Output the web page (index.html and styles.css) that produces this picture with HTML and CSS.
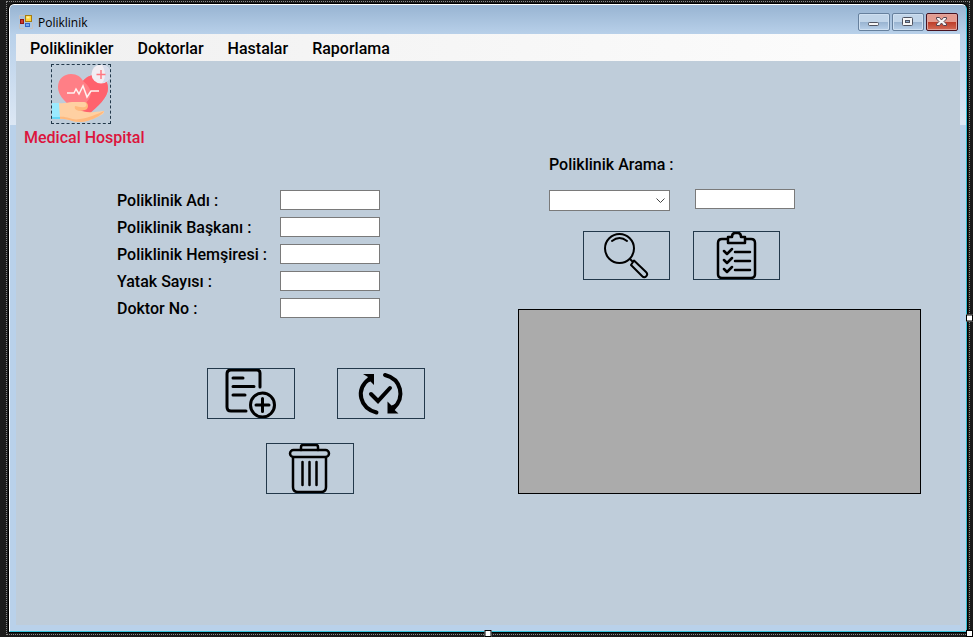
FILE: index.html
```html
<!DOCTYPE html>
<html lang="tr">
<head>
<meta charset="utf-8">
<title>Poliklinik</title>
<link rel="stylesheet" href="styles.css">
</head>
<body>
<div class="designer">
  <div class="window">
    <header class="titlebar">
      <svg class="app-icon" width="14" height="14" viewBox="0 0 14 14" aria-hidden="true">
        <path d="M.5 4V.5H6M.5 9v4.500H5M11 13.500h2.500V8" fill="none" stroke="#c5c2bf"/>
        <rect x="6.500" y=".5" width="6" height="6" fill="#ffd43c" stroke="#a67d12"/>
        <path d="M7.500 1.500h3v2h-3z" fill="#fff0a5"/>
        <rect x="1.500" y="4.500" width="3" height="4" fill="#cf392d" stroke="#8e1714"/>
        <rect x="6.500" y="8.500" width="4" height="3" fill="#77a9f2" stroke="#3166c4"/>
      </svg>
      <h1 class="title">Poliklinik</h1>
      <div class="controls">
        <button class="control" type="button" aria-label="Simge durumuna küçült"><svg width="30" height="16" viewBox="0 0 30 16"><rect x="9.500" y="8.500" width="10" height="3" rx="1" fill="#f7f7f7" stroke="#4f5360"/></svg></button>
        <button class="control" type="button" aria-label="Ekranı kapla"><svg width="30" height="16" viewBox="0 0 30 16"><rect x="9.500" y="3.500" width="10" height="8" rx="1" fill="#f7f7f7" stroke="#4f5360"/><rect x="12.500" y="6.500" width="4" height="2" fill="#8daaca" stroke="#4f5360"/></svg></button>
        <button class="control control-close" type="button" aria-label="Kapat"><svg width="30" height="16" viewBox="0 0 30 16"><path d="M9.500 3.500h3l2 2.500 2-2.500h3v1.500l-2.500 2.500 2.500 2.500v1.500h-3l-2-2.500-2 2.500h-3V10l2.500-2.500L9.500 5z" fill="#f7f7f7" stroke="#574550"/></svg></button>
      </div>
    </header>
    <nav class="menu">
      <a href="#poliklinikler">Poliklinikler</a>
      <a href="#doktorlar">Doktorlar</a>
      <a href="#hastalar">Hastalar</a>
      <a href="#raporlama">Raporlama</a>
    </nav>
    <main class="client">
      <section class="left">
        <div class="brand">
          <svg class="logo" viewBox="0 0 58 58" aria-hidden="true">
            <path d="M31 50C21 43 6 34 6 22 6 14 12 9 19 9c6 0 10 3 12 7 3-4 7-6 11-6 8 0 14 5 14 13 0 10-12 21-25 27z" fill="#ff7f86"/>
            <path d="M31 16c3-4 8-6 12-6 7 0 13 5 13 13 0 10-10 18-20 27l-9-8c12-5 17-16 4-26z" fill="#ff626d"/>
            <path d="M15 28h7l2-4 3 5 4-8 4 11 4-6h8" fill="none" stroke="#fff3f1" stroke-width="1.500"/>
            <circle cx="49" cy="9" r="9.500" fill="#f2edf2"/><path d="M50 0a9 9 0 0 1 0 18c4-5 4-12 0-18z" fill="#d6dceb"/>
            <path d="M49 5v9M44.500 9.500h9" stroke="#ff7882" stroke-width="1.500"/>
            <path d="M7 38c5 1 9-1 13-1h12c4 0 4 5 1 6l-8 1c9 5 17 3 26 2 2 0 1 2 0 3-7 4-15 8-23 8-9 0-13-4-21-3z" fill="#ffd0a2"/>
            <path d="M23 41c3 0 5 2 10 1 2-1 2-3 0-5 4 1 4 7 0 8l-6 1c-3-1-5-2-4-5z" fill="#ffb97d"/>
            <path d="M7 52c9-1 13 4 21 2 9-1 17-5 24-8-2 5-16 11-24 11-9 0-13-4-21-3z" fill="#ffb97d"/>
            <path d="M0 38h7l1 15H0z" fill="#9beaff"/><path d="M0 52h8v2H0z" fill="#65d7f7"/>
          </svg>
          <p class="brand-name">Medical Hospital</p>
        </div>
        <form class="form">
          <label for="ad">Poliklinik Adı :</label><input id="ad" type="text">
          <label for="baskan">Poliklinik Başkanı :</label><input id="baskan" type="text">
          <label for="hemsire">Poliklinik Hemşiresi :</label><input id="hemsire" type="text">
          <label for="yatak">Yatak Sayısı :</label><input id="yatak" type="text">
          <label for="doktor">Doktor No :</label><input id="doktor" type="text">
        </form>
        <div class="actions">
          <div class="action-row">
            <button class="tool" type="button" aria-label="Ekle"><svg width="86" height="49" viewBox="0 0 86 49">
              <g fill="none" stroke="#000" stroke-width="3" stroke-linecap="round"><path d="M38 42H23q-4 0-4-4V5q0-4 4-4h26q3 0 3 3v14M25 9h10M25 17.500h21M25 26h12"/><circle cx="54.500" cy="36" r="12"/><path d="M48 36h13M54.500 29.500v13"/></g></svg></button>
            <button class="tool" type="button" aria-label="Güncelle"><svg width="86" height="49" viewBox="0 0 86 49">
              <path d="M38.500 43.500C22 39 17 21 31 10M47 6c16 4 21 22 8 34" fill="none" stroke="#000" stroke-width="4" stroke-linecap="round"/><path d="M25 5h11v11l-3.500-3.500L28 14l2-6zM60.500 44.500h-11v-12l4 4 4-1.500-2 5z"/><path d="M33 25l7 7 12-13" fill="none" stroke="#000" stroke-width="4" stroke-linecap="round"/></svg></button>
          </div>
          <div class="action-row action-row-delete">
            <button class="tool" type="button" aria-label="Sil"><svg width="86" height="49" viewBox="0 0 86 49">
              <g fill="none" stroke="#000" stroke-width="2.500" stroke-linecap="round"><rect x="23" y="6" width="39" height="7" rx="3.500"/><path d="M34 6V3q0-2 2-2h13q2 0 2 2v3M26 14v29q0 5 5 5h23q5 0 5-5V14M35.500 18v23M42.500 18v23M49.500 18v23"/></g></svg></button>
          </div>
        </div>
      </section>
      <section class="right">
        <label class="search-label" for="alan">Poliklinik Arama :</label>
        <div class="search-fields">
          <select id="alan"><option value=""></option></select>
          <input type="text" aria-label="Aranacak değer">
        </div>
        <div class="search-actions">
          <button class="tool tool-small" type="button" aria-label="Ara"><svg width="85" height="47" viewBox="0 0 85 47">
            <g fill="none" stroke="#000" stroke-width="2" stroke-linecap="round"><circle cx="35.500" cy="16.500" r="14.500"/><path d="M28 9q7.500-6 15 0M46 27l3 3M50 28.500L62 40c3 3-1 7-4 4L47 33z" stroke-linejoin="round"/></g></svg></button>
          <button class="tool tool-small" type="button" aria-label="Listele"><svg width="85" height="47" viewBox="0 0 85 47">
            <g fill="none" stroke="#000" stroke-width="2.500" stroke-linejoin="round"><path d="M33 7h-5q-4 0-4 4v31q0 4 4 4h29q4 0 4-4V11q0-4-4-4h-5"/><path d="M34 11V5h4q0-4 3-4h3q3 0 3 4h4v6z"/><path d="M30 19l3 3 5-5M41 20h15M30 28l3 3 5-5M41 29h15M30 37l3 3 5-5M41 38h15" stroke-linecap="round"/></g></svg></button>
        </div>
        <div class="grid-view"></div>
      </section>
    </main>
  </div>
  <span class="handle handle-right"></span>
  <span class="handle handle-bottom"></span>
  <span class="handle handle-corner"></span>
</div>
</body>
</html>
```
FILE: styles.css
```css
* { box-sizing: border-box; }
body {
  margin: 0;
  min-height: 100vh;
  display: flex;
  padding: 1px 3px 2px 6px;
  background: #1b1b1b;
  color: #000;
  font: 500 16px/20px Roboto, "Liberation Sans", sans-serif;
}
button, input, select { font: inherit; margin: 0; }
.designer {
  position: relative;
  flex: 1;
  display: flex;
  padding: 1px;
  border: 1px dotted #8a8a8a;
}
.window {
  flex: 1;
  display: flex;
  flex-direction: column;
  padding: 0 6px 6px;
  border: 1px solid;
  border-color: #fff #35c4dc #35c4dc #fff;
  border-radius: 5px 5px 0 0;
  outline: 1px solid #000;
  margin: 1px;
  background:
    linear-gradient(#b9d1ea, #dce7f4) left 30px / 6px 90px no-repeat,
    linear-gradient(#b9d1ea, #dce7f4) right 30px / 6px 90px no-repeat,
    linear-gradient(#98b4d2, #b9d1ea) top / 100% 30px no-repeat,
    #b9d1ea;
}
.titlebar {
  display: flex;
  align-items: flex-start;
  height: 29px;
  padding: 8px 2px 0 3px;
}
.app-icon { margin-top: 2px; }
.title {
  margin: 0 auto 0 5px;
  font: 400 12px/20px "Open Sans", "Noto Sans", sans-serif;
}
.controls { display: flex; gap: 2px; }
.control {
  display: flex;
  width: 32px;
  height: 18px;
  padding: 0;
  border: 1px solid #66809d;
  border-radius: 2px;
  box-shadow: inset 0 0 0 1px #cfe0f1;
  background: linear-gradient(#c1d5e9 50%, #98b3d0 50%, #b9d1ea);
}
.control-close {
  border-color: #48121f;
  box-shadow: inset 0 0 0 1px #e1a49c;
  background: linear-gradient(#e49c90 50%, #bc3b27 50%, #d46c57);
}
.menu {
  display: flex;
  gap: 24px;
  height: 27px;
  padding: 5px 14px 0;
  background: linear-gradient(90deg, #f0f0f0, #fdfdfd);
}
.menu a { color: inherit; text-decoration: none; }
.client {
  flex: 1;
  display: grid;
  grid-template-columns: 502fr 403fr;
  padding-right: 39px;
  background: #bfcdda;
}
.brand { padding: 3px 0 0 8px; }
.logo {
  display: block;
  width: 60px;
  height: 60px;
  margin-left: 27px;
  border: 1px dashed #22384a;
}
.brand-name { margin: 4px 0 0; color: #dc143c; }
.form {
  display: grid;
  grid-template-columns: 163px 100px;
  grid-auto-rows: 27px;
  align-items: center;
  margin: 39px 0 0 101px;
}
input {
  width: 100px;
  height: 20px;
  padding: 0 3px;
  border: 1px solid #7a7a7a;
  background: #fff;
}
.form input { margin-bottom: 2px; }
.actions {
  display: flex;
  flex-direction: column;
  gap: 24px;
  margin: 46px 0 0 191px;
}
.action-row { display: flex; gap: 42px; }
.action-row-delete { padding-left: 59px; }
.tool {
  display: flex;
  width: 88px;
  height: 51px;
  padding: 0;
  border: 1px solid #22384a;
  background: transparent;
}
.tool-small { width: 87px; height: 49px; }
.right { padding-top: 94px; }
.search-label { display: block; margin-left: 31px; }
.search-fields {
  display: flex;
  gap: 25px;
  height: 22px;
  margin: 14px 0 0 31px;
}
select {
  align-self: flex-end;
  width: 121px;
  height: 21px;
  padding: 0 20px 0 3px;
  border: 1px solid #7a7a7a;
  border-radius: 0;
  appearance: none;
  background: #fff url("data:image/svg+xml,%3Csvg xmlns='http://www.w3.org/2000/svg' width='9' height='5'%3E%3Cpath d='M.5.5l4 4 4-4' fill='none' stroke='%23444'/%3E%3C/svg%3E") right 4px center no-repeat;
}
.search-actions {
  display: flex;
  gap: 23px;
  margin: 20px 0 0 65px;
}
.grid-view {
  height: 185px;
  margin-top: 29px;
  border: 1px solid #000;
  background: #ababab;
}
.handle {
  position: absolute;
  width: 7px;
  height: 7px;
  border: 1px solid #000;
  background: #fff;
}
.handle-right { right: -4px; top: 50%; transform: translateY(-50%); }
.handle-bottom { left: 50%; bottom: -3px; transform: translateX(-50%); }
.handle-corner { right: -4px; bottom: -3px; }
```
